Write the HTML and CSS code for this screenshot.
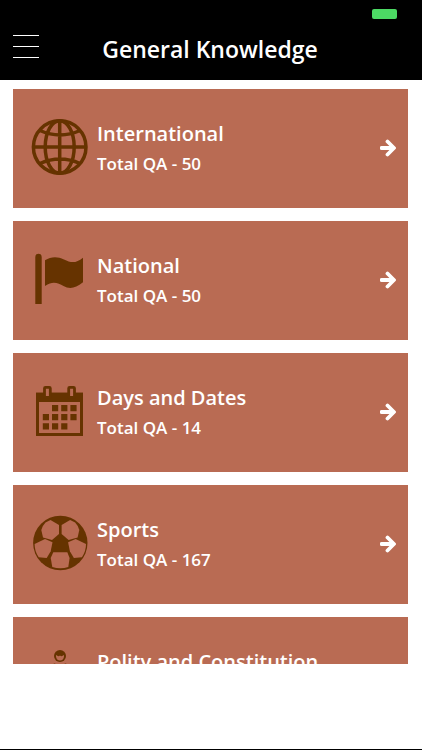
FILE: index.html
```
<!DOCTYPE html>
<html lang="en">
<head>
    <meta charset="UTF-8" />
    <meta name="viewport" content="width=device-width, initial-scale=1" />
    <title>General Knowledge</title>
    <link rel="stylesheet" href="styles.css">
</head>
<body>
<svg class="defs" aria-hidden="true">
    <symbol id="arrow" viewBox="0 0 16 18">
        <path d="M1.500 9H13M7.500 2.500L14 9l-6.500 6.500" fill="none" stroke="#fff" stroke-width="3.800" stroke-linecap="round" stroke-linejoin="round" />
    </symbol>
</svg>

<header class="header">
    <div class="status-bar"><span class="battery"></span></div>
    <div class="navbar">
        <button class="menu" type="button" aria-label="Menu">
            <span></span><span></span><span></span>
        </button>
        <h1>General Knowledge</h1>
    </div>
</header>

<main class="list">
    <a class="card" href="#international">
        <svg class="icon" viewBox="0 0 58 58">
            <g fill="none" stroke="#663300" stroke-width="3.500">
                <circle cx="28.700" cy="29" r="26.300" />
                <ellipse cx="28.700" cy="29" rx="14.500" ry="26.300" />
                <path d="M28.700 2v54M2 29h54M9 12.500q20 9 40 0M9 45.500q20-9 40 0" />
            </g>
        </svg>
        <div class="info">
            <h2>International</h2>
            <p>Total QA - 50</p>
        </div>
        <svg class="arrow"><use href="#arrow" /></svg>
    </a>

    <a class="card" href="#national">
        <svg class="icon" viewBox="0 0 58 58">
            <g fill="#663300">
                <path d="M4.300 54V7a3.200 3.200 0 0 1 6.400 0V54z" />
                <path d="M14 10.300C20 6.500 26 6 33 9.500s12 4 19-1.800V32.300C44 39 38 39 32.500 36S22 30.500 14 36z" />
            </g>
        </svg>
        <div class="info">
            <h2>National</h2>
            <p>Total QA - 50</p>
        </div>
        <svg class="arrow"><use href="#arrow" /></svg>
    </a>

    <a class="card" href="#dates">
        <svg class="icon" viewBox="0 0 58 58">
            <path d="M6.500 12.200h44v40.300h-44z" fill="none" stroke="#663300" stroke-width="3" />
            <path d="M5 10.700h47V20H5z" fill="#663300" />
            <g fill="#b96b53" stroke="#663300" stroke-width="2.800">
                <rect x="13.500" y="5.300" width="5.800" height="10" rx="1" />
                <rect x="37.700" y="5.300" width="5.800" height="10" rx="1" />
            </g>
            <path d="M21 23h6.200v6.200H21zM30.200 23h6.200v6.200h-6.200zM39.400 23h6.200v6.200h-6.200zM11.800 32H18v6.200h-6.200zM21 32h6.200v6.200H21zM30.200 32h6.200v6.200h-6.200zM39.400 32h6.200v6.200h-6.200zM11.800 41.200H18v6.200h-6.200zM21 41.200h6.200v6.200H21zM30.200 41.200h6.200v6.200h-6.200z" fill="#663300" />
        </svg>
        <div class="info">
            <h2>Days and Dates</h2>
            <p>Total QA - 14</p>
        </div>
        <svg class="arrow"><use href="#arrow" /></svg>
    </a>

    <a class="card" href="#sports">
        <svg class="icon" viewBox="0 0 58 58">
            <circle cx="29.300" cy="29" r="27.200" fill="#663300" />
            <g fill="#b96b53">
                <path id="panel-top" d="M10.300 16Q11.500 11.500 14.500 8.500L19.500 6 28 11v9l-7 6-9-2.500z" />
                <path id="panel-side" d="M14 25l7.500 3.300-1.800 9L15.700 44l-8 -.7Q3.500 37 3.600 30z" />
                <use href="#panel-top" transform="matrix(-1 0 0 1 58.600 0)" />
                <use href="#panel-side" transform="matrix(-1 0 0 1 58.600 0)" />
                <path d="M22.300 38.300h14l2.300 5.700-1.300 9Q29.300 55.600 21.300 53L19.700 44z" />
            </g>
        </svg>
        <div class="info">
            <h2>Sports</h2>
            <p>Total QA - 167</p>
        </div>
        <svg class="arrow"><use href="#arrow" /></svg>
    </a>

    <a class="card" href="#polity">
        <svg class="icon" viewBox="0 0 58 58">
            <circle cx="29" cy="10" r="6" fill="#663300" />
            <path d="M25 9q2.500 2 4 .5 1.500 1.500 4-.5v1.500q-.5 4-4 4t-4-4z" fill="#b96b53" />
            <path d="M24 17.500l5 5 5-5q6 1 6 8v6H18v-6q0-7 6-8zM13 33h32v4H13zM17 39h24v17H17z" fill="#663300" />
        </svg>
        <div class="info">
            <h2>Polity and Constitution</h2>
        </div>
        <svg class="arrow"><use href="#arrow" /></svg>
    </a>
</main>

<footer class="banner"></footer>
</body>
</html>
```
FILE: styles.css
```
:root {
    --card: #b96b53;
    --battery: #4cd964;
}
* {
    box-sizing: border-box;
}
body {
    display: flex;
    flex-direction: column;
    height: 100vh;
    margin: 0;
    background-color: #fff;
    color: #fff;
    font-family: "Trebuchet MS", "Open Sans", "Noto Sans", sans-serif;
    font-weight: 600;
}
h1, h2, p {
    margin: 0;
    font-weight: 600;
}
.defs {
    display: none;
}
.header {
    flex: none;
    background-color: #000;
}
.status-bar {
    display: flex;
    justify-content: flex-end;
    padding: 9px 25px 1px;
}
.battery {
    width: 25px;
    height: 10px;
    border-radius: 2px;
    background-color: var(--battery);
}
.navbar {
    display: grid;
    grid-template-columns: 40px 1fr 42px;
    align-items: start;
    height: 60px;
}
.menu {
    display: flex;
    flex-direction: column;
    gap: 10px;
    padding: 15px 0 15px 13px;
    border: none;
    background: none;
    cursor: pointer;
}
.menu span {
    width: 26px;
    height: 1px;
    background-color: #fff;
}
h1 {
    font-size: 23px;
    line-height: 58px;
    text-align: center;
    white-space: nowrap;
}
.list {
    display: flex;
    flex: 1;
    flex-direction: column;
    gap: 13px;
    min-height: 0;
    padding: 9px 14px 0 13px;
    overflow-y: auto;
    scrollbar-width: none;
}
.card {
    display: flex;
    flex: none;
    align-items: center;
    gap: 8px;
    height: 119px;
    padding: 0 12px 0 18px;
    background-color: var(--card);
    color: #fff;
    text-decoration: none;
}
.icon {
    flex: none;
    width: 58px;
    height: 58px;
    margin-bottom: 3px;
}
.info {
    flex: 1;
    min-height: 61px;
    white-space: nowrap;
}
h2 {
    font-size: 20px;
    line-height: 31px;
}
p {
    font-size: 17px;
    line-height: 30px;
}
.arrow {
    flex: none;
    width: 16px;
    height: 18px;
    margin-bottom: 1px;
}
.banner {
    flex: none;
    height: 86px;
    border-bottom: 1px solid #000;
}
```
